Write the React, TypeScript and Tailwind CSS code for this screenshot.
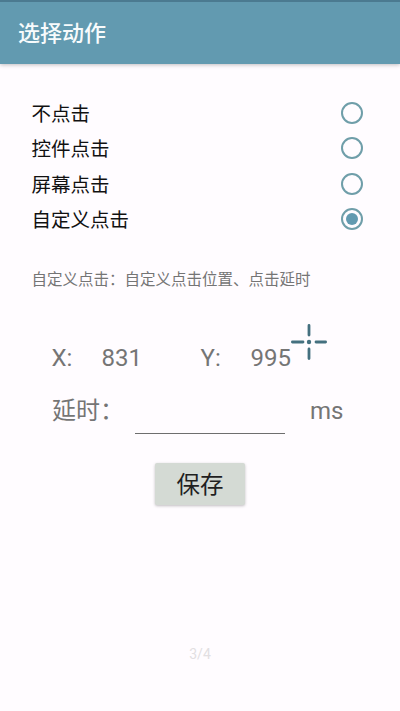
const cjk = "font-['Roboto','Noto_Sans_CJK_SC',sans-serif]";

function Radio({ checked }: { checked?: boolean }) {
  return (
    <span className="flex h-[22px] w-[22px] items-center justify-center rounded-full border-2 border-[#6f9ea9]">
      {checked && <span className="h-[12px] w-[12px] rounded-full bg-[#629ab0]" />}
    </span>
  );
}

function Option({ label, checked }: { label: string; checked?: boolean }) {
  return (
    <div className="flex h-[35.4px] items-center justify-between pr-[37px] pl-[31.5px]">
      <span className="pt-[3px] text-[19.5px] leading-none text-[#111111]">{label}</span>
      <Radio checked={checked} />
    </div>
  );
}

function Crosshair() {
  return (
    <svg viewBox="0 0 36 36" className="absolute top-[-20px] left-[291px] h-[36px] w-[36px]" fill="none" stroke="#44707f" strokeWidth="2.8" strokeLinecap="round">
      <path d="M18 1.4v9.6M18 25v9.6M1.4 18h10.6M25 18h9.6" />
      <circle cx="18" cy="18" r="2.2" fill="#44707f" stroke="none" />
    </svg>
  );
}

export default function App() {
  return (
    <div className={`flex h-[711px] w-[400px] flex-col overflow-hidden bg-[#fffcff] ${cjk}`}>
      <header className="flex h-[64px] items-center border-t-2 border-[#4b7a90] bg-[#629ab0] pt-[1px] pl-[18px] shadow-[0_1px_4px_rgba(0,0,0,0.25)]">
        <h1 className="text-[22px] leading-none font-medium text-[#f7fbfc]">选择动作</h1>
      </header>
      <main className="flex flex-1 flex-col pt-[31.3px]">
        <Option label="不点击" />
        <Option label="控件点击" />
        <Option label="屏幕点击" />
        <Option label="自定义点击" checked />
        <p className="mt-[33px] pl-[31.5px] text-[15.5px] leading-[20px] text-[#757575]">自定义点击：自定义点击位置、点击延时</p>
        <div className="relative mt-[54px] flex h-[28px] items-center pl-[51.5px] text-[24px] text-[#757575]">
          <span className="w-[50px]">X:</span>
          <span className="w-[99px]">831</span>
          <span className="w-[50px]">Y:</span>
          <span>995</span>
          <Crosshair />
        </div>
        <div className="mt-[19px] flex items-end pl-[52px] text-[24px] text-[#757575]">
          <span className="mb-[3px] h-[40px] w-[83px] leading-[40px]">延时：</span>
          <span className="h-[38px] w-[150px] border-b border-[#6e6e6e]" />
          <span className="mb-[3px] ml-[25px] h-[40px] leading-[40px]">ms</span>
        </div>
        <button className="mt-[29px] h-[42px] w-[90px] self-center rounded-[2px] bg-[#d4dad4] pt-[3px] text-[23.5px] leading-none text-[#1f1f1f] shadow-[0_1px_3px_rgba(0,0,0,0.25)]">保存</button>
        <div className="mt-[139px] text-center text-[14px] leading-[20px] text-[#e2dfe2]">3/4</div>
      </main>
    </div>
  );
}
